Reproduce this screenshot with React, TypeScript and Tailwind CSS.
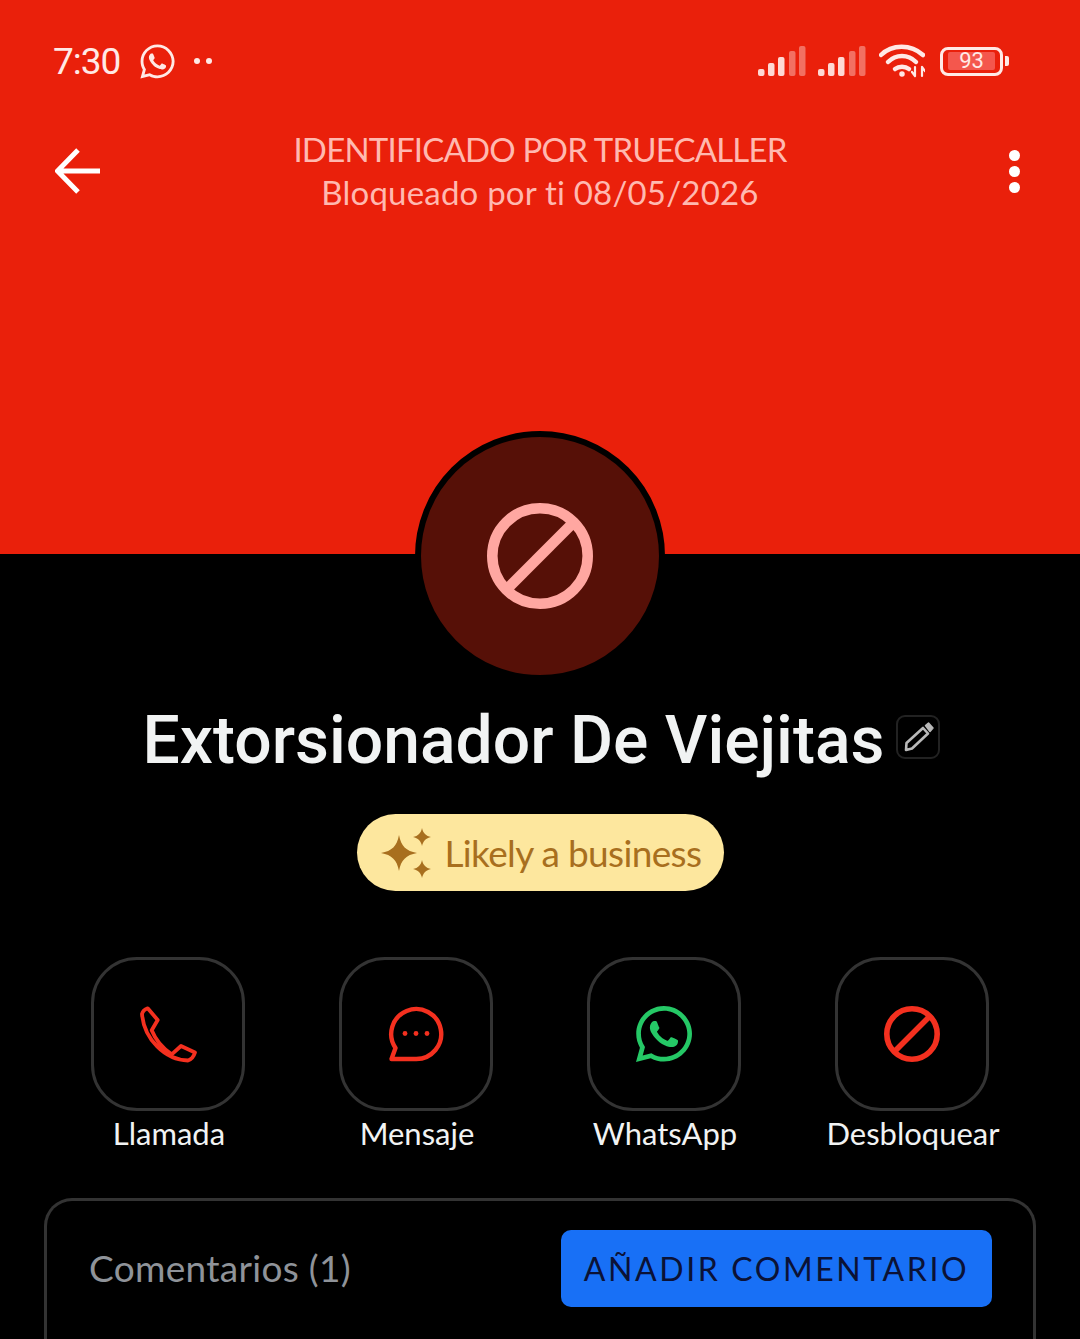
import { FaWhatsapp } from 'react-icons/fa';

const hand = "font-['Lato',sans-serif]";

function SignalIcon() {
  const bars = [
    { x: 0, h: 7, o: 0.92 },
    { x: 10, h: 13, o: 0.92 },
    { x: 20, h: 19, o: 0.92 },
    { x: 31, h: 25, o: 0.4 },
    { x: 41, h: 30, o: 0.4 },
  ];
  return (
    <svg width="48" height="30" viewBox="0 0 48 30">
      {bars.map((b) => (
        <rect key={b.x} x={b.x} y={30 - b.h} width="6.5" height={b.h} rx="2" fill="#ffe9e6" opacity={b.o} />
      ))}
    </svg>
  );
}

function WifiIcon() {
  return (
    <svg width="46" height="34" viewBox="0 0 46 34" fill="none" stroke="#ffe9e6" strokeLinecap="round" strokeWidth="4.5">
      <path d="M2 11C13 0 32 0 44 11" />
      <path d="M9 18C17 10 29 10 37 18" />
      <path d="M16 25c4-3 10-3 14 0" />
      <circle cx="23" cy="30" r="2" fill="#ffe9e6" strokeWidth="1.5" />
      <path d="M36 23v9M43 23v9M33 28l3 4M46 27l-3-4" strokeWidth="2.2" />
    </svg>
  );
}

function BlockIcon({ size, width, color }: { size: number; width: number; color: string }) {
  const r = 50 - width / 2;
  return (
    <svg width={size} height={size} viewBox="0 0 100 100" fill="none" stroke={color} strokeWidth={width}>
      <circle cx="50" cy="50" r={r} />
      <path d="M82 18L18 82" />
    </svg>
  );
}

function PhoneIcon() {
  return (
    <svg width="66" height="66" viewBox="0 0 66 66" fill="none" stroke="#f4301f" strokeWidth="3.8" strokeLinejoin="round">
      <path d="M7 13Q8 9 12.7 7.3L22.7 19 16.7 29.3C21 40 27 47 36.7 53.3L46 45 60 51.5Q58 58 53 59.5C30 59 9 38 7 13Z" />
    </svg>
  );
}

function MessageIcon() {
  return (
    <svg width="56" height="56" viewBox="0 0 56 56" fill="none">
      <path d="M28 53H3.5L7.5 42A25 25 0 1 1 28 53Z" stroke="#f4301f" strokeWidth="4.4" strokeLinejoin="round" />
      <circle cx="17" cy="27.5" r="2.4" fill="#f4301f" />
      <circle cx="28" cy="27.5" r="2.4" fill="#f4301f" />
      <circle cx="39" cy="27.5" r="2.4" fill="#f4301f" />
    </svg>
  );
}

function PencilIcon() {
  return (
    <svg width="40" height="40" viewBox="0 0 40 40" fill="none" stroke="#b9b9b9" strokeWidth="2.6" strokeLinejoin="round">
      <path d="M8 33L8.5 26 25 11 30 16.5 14 31.5Z" />
      <path d="M27.5 8.5L30.5 6 35 11 32 14.5Z" fill="#b9b9b9" strokeWidth="1.5" />
    </svg>
  );
}

function Sparkles() {
  return (
    <svg width="52" height="52" viewBox="0 0 52 52" fill="#a86f1e">
      <path d="M19 8C21 19 26 24 37 26 26 28 21 33 19 44 17 33 12 28 1 26 12 24 17 19 19 8Z" />
      <path d="M42 1C43 6 46 9 51 10 46 11 43 14 42 19 41 14 38 11 33 10 38 9 41 6 42 1Z" />
      <path d="M42 33C43 38 46 41 51 42 46 43 43 46 42 51 41 46 38 43 33 42 38 41 41 38 42 33Z" />
    </svg>
  );
}

const actions = [
  { label: 'Llamada', icon: <PhoneIcon /> },
  { label: 'Mensaje', icon: <MessageIcon /> },
  { label: 'WhatsApp', icon: <FaWhatsapp size={64} color="#25c866" /> },
  { label: 'Desbloquear', icon: <BlockIcon size={56} width={10} color="#f4301f" /> },
];

export default function App() {
  return (
    <div className={`flex h-[1339px] w-[1080px] flex-col overflow-hidden bg-black ${hand}`}>
      {/* Red header */}
      <div className="flex h-[554px] shrink-0 flex-col bg-[#ea200b]">
        {/* Status bar */}
        <div className="mt-[43px] flex h-[36px] items-center justify-between pl-[53px] pr-[71px]">
          <div className="flex items-center">
            <span className="w-[68px] font-['Roboto',sans-serif] text-[37px] leading-none tracking-[-1px] text-[#ffe9e6]">7:30</span>
            <FaWhatsapp size={39} color="#ffe9e6" className="ml-[17px]" />
            <span className="ml-[17px] h-[6px] w-[6px] rounded-full bg-[#ffe9e6]" />
            <span className="ml-[6px] h-[6px] w-[6px] rounded-full bg-[#ffe9e6]" />
          </div>
          <div className="flex items-center">
            <SignalIcon />
            <div className="ml-[12px]">
              <SignalIcon />
            </div>
            <div className="ml-[13px]">
              <WifiIcon />
            </div>
            <div className="ml-[15px] flex h-[29px] w-[63px] items-center justify-center rounded-[8px] border-[3px] border-[#ffe9e6]">
              <div className="flex h-[18px] w-[47px] items-center justify-center rounded-[2px] bg-[#f4574d] font-['Roboto',sans-serif] text-[22px] leading-none text-[#ffe9e6]">
                93
              </div>
            </div>
            <span className="ml-[2px] h-[10px] w-[4px] rounded-r-[2px] bg-[#ffe9e6]" />
          </div>
        </div>

        {/* Nav row */}
        <div className="mt-[49px] flex items-center pl-[55px] pr-[60px]">
          <svg width="46" height="46" viewBox="0 0 46 46" fill="none" stroke="#ffffff" strokeWidth="5">
            <path d="M45 23H4M23 2L2.5 23 23 44" />
          </svg>
          <div className="flex flex-1 flex-col items-center pl-[5px] text-[33px] leading-[43px] text-[#ffb9b0]">
            <span className="tracking-[-0.8px]">IDENTIFICADO POR TRUECALLER</span>
            <span className="tracking-[0.2px]">Bloqueado por ti 08/05/2026</span>
          </div>
          <div className="flex w-[46px] flex-col items-end gap-[5px]">
            <span className="h-[11px] w-[11px] rounded-full bg-white" />
            <span className="h-[11px] w-[11px] rounded-full bg-white" />
            <span className="h-[11px] w-[11px] rounded-full bg-white" />
          </div>
        </div>
      </div>

      {/* Profile */}
      <div className="-mt-[123px] flex flex-col items-center">
        <div className="flex h-[250px] w-[250px] items-center justify-center rounded-full border-[6px] border-black bg-[#561007]">
          <div className="blur-[0.6px]">
            <BlockIcon size={106} width={10} color="#ffa7a1" />
          </div>
        </div>

        <div className="mt-[24px] ml-[3px] flex items-center">
          <span className="font-['Roboto',sans-serif] text-[66px] font-medium leading-[72px] text-[#f1f3f3]">
            Extorsionador De Viejitas
          </span>
          <span className="mb-[8px] ml-[12px] flex h-[44px] w-[44px] items-center justify-center rounded-[9px] border-2 border-[#222222]">
            <PencilIcon />
          </span>
        </div>

        <div className="mt-[37px] flex h-[77px] w-[367px] items-center rounded-full bg-[#fde79e] pl-[23px]">
          <Sparkles />
          <span className="ml-[13px] text-[37px] leading-none tracking-[-0.65px] text-[#a86f1e]">Likely a business</span>
        </div>

        {/* Actions */}
        <div className="mt-[66px] flex gap-[94px]">
          {actions.map((a) => (
            <div key={a.label} className="flex w-[154px] flex-col items-center">
              <div className="flex h-[154px] w-[154px] items-center justify-center rounded-[46px] border-[3px] border-[#333333]">
                {a.icon}
              </div>
              <span className="mt-[2px] ml-[2px] whitespace-nowrap text-[31px] leading-[40px] text-[#f1f3f3]">
                {a.label}
              </span>
            </div>
          ))}
        </div>
      </div>

      {/* Comments card */}
      <div className="mx-[44px] mt-[45px] flex h-[300px] shrink-0 items-start justify-between rounded-t-[28px] border-x-[3px] border-t-[3px] border-[#333333] pl-[42px] pr-[41px] pt-[29px]">
        <span className="mt-[18px] text-[37px] leading-[40px] tracking-[0.3px] text-[#8f9399]">Comentarios (1)</span>
        <div className="flex h-[77px] w-[431px] items-center justify-center rounded-[10px] bg-[#1870f6] text-[32px] leading-none tracking-[2.6px] text-[#0b1236]">
          AÑADIR COMENTARIO
        </div>
      </div>
    </div>
  );
}
